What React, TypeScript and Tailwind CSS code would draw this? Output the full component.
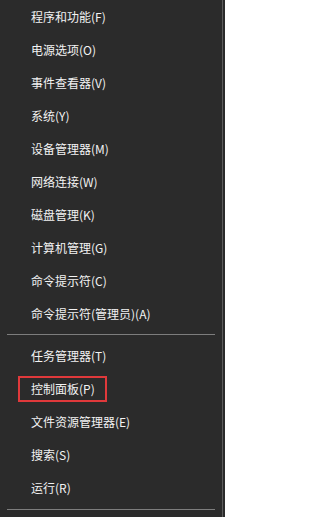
const groups = [
  [
    '程序和功能(F)',
    '电源选项(O)',
    '事件查看器(V)',
    '系统(Y)',
    '设备管理器(M)',
    '网络连接(W)',
    '磁盘管理(K)',
    '计算机管理(G)',
    '命令提示符(C)',
    '命令提示符(管理员)(A)',
  ],
  ['任务管理器(T)', '控制面板(P)', '文件资源管理器(E)', '搜索(S)', '运行(R)'],
];

function Item({ label }: { label: string }) {
  // 控制面板 gets the red highlight frame
  if (label === '控制面板(P)') {
    return (
      <div className="flex h-[33px] items-center">
        <span className="ml-[18px] flex h-[26px] w-[89px] items-center border-2 border-[#e0393b] pl-[11px]">
          {label}
        </span>
      </div>
    );
  }
  return <div className="flex h-[33px] items-center pl-[31px]">{label}</div>;
}

export default function App() {
  return (
    <div
      className="flex h-[517px] w-[225px] bg-[#2b2b2b] text-[12px] text-[#f2f2f2]"
      style={{ fontFamily: '"Noto Sans CJK SC", "Noto Sans", sans-serif' }}
    >
      <div className="flex w-[222px] flex-col">
        {groups.map((items, i) => (
          <div key={i} className="flex flex-col">
            {items.map((label) => (
              <Item key={label} label={label} />
            ))}
            <div className={i === 0 ? 'pt-[4px] pb-[4px]' : 'pt-[5px]'}>
              <div className="mx-[7px] h-px bg-[#7d7d7d]" />
            </div>
          </div>
        ))}
      </div>
      <div className="w-px bg-[#5c5c5c]" />
    </div>
  );
}
